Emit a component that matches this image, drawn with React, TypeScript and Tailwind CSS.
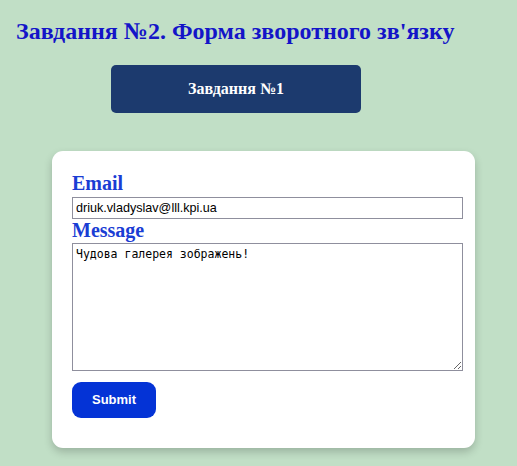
export default function App() {
  return (
    <div className="min-h-[466px] bg-[#c1dfc6] pt-[18px] pb-[18px]">
      <h1 className="ml-[16px] text-[24px] font-bold leading-[27.6px] text-[#1414c8] [font-family:'Liberation_Serif',serif]">
        Завдання №2. Форма зворотного зв'язку
      </h1>

      <button className="ml-[111px] mt-[19px] flex h-[48px] w-[250px] items-center justify-center rounded-[5px] bg-[#1c3a6e] text-[16px] font-bold text-white [font-family:'Liberation_Serif',serif]">
        Завдання №1
      </button>

      {/* Feedback form */}
      <form className="ml-[52px] mt-[38px] w-[423px] rounded-[11px] bg-white px-[20px] pt-[21px] pb-[30px] shadow-[0_4px_8px_rgba(0,0,0,0.2)]">
        <label className="block text-[20px] font-bold leading-[23px] text-[#1a3dd4] [font-family:'Liberation_Serif',serif]">
          Email
        </label>
        <input
          type="email"
          defaultValue="driuk.vladyslav@lll.kpi.ua"
          className="mt-[2px] block h-[22px] w-[391px] border border-[#8f8f9d] px-[3px] text-[12.6px] text-black [font-family:'Liberation_Sans',Arial,sans-serif] outline-none"
        />
        <label className="block text-[20px] font-bold leading-[23px] text-[#1a3dd4] [font-family:'Liberation_Serif',serif]">
          Message
        </label>
        <textarea
          defaultValue="Чудова галерея зображень!"
          className="mt-[1px] block h-[128px] w-[391px] border border-[#8f8f9d] px-[3px] py-[2px] text-[11.5px] text-black [font-family:'DejaVu_Sans_Mono',monospace] outline-none"
        />
        <button
          type="button"
          className="mt-[11px] h-[36px] w-[84px] rounded-[9px] bg-[#0433d6] text-[13px] font-bold text-white [font-family:'Liberation_Sans',Arial,sans-serif]"
        >
          Submit
        </button>
      </form>
    </div>
  )
}
